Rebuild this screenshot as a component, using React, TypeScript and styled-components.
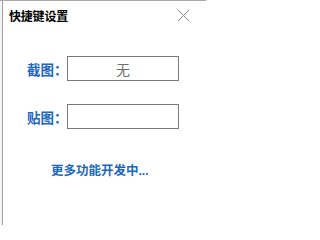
import React from "react";
import styled, { createGlobalStyle } from "styled-components";

const GlobalStyle = createGlobalStyle`
  html, body {
    margin: 0;
    padding: 0;
    background: #ffffff;
  }
  body {
    font-family: "Microsoft YaHei", "Noto Sans CJK SC", "Noto Sans", sans-serif;
    width: 206px;
    height: 225px;
    overflow: hidden;
  }
`;

const Screen = styled.div`
  height: 225px;
  border-top: 1px solid #a9a9a9;
  box-sizing: border-box;
  padding-left: 2px;
  background: #f4f4f4;
`;

const Dialog = styled.div`
  height: 100%;
  border-left: 1px solid #a0a0a0;
  background: #ffffff;
  display: flex;
  flex-direction: column;
`;

const TitleBar = styled.div`
  height: 29px;
  display: flex;
  align-items: center;
  justify-content: space-between;
  padding: 0 16px 0 6px;
`;

const Title = styled.span`
  font-size: 12px;
  color: #000000;
  font-weight: 700;
  letter-spacing: -0.2px;
`;

const CloseButton = styled.button`
  border: none;
  background: none;
  padding: 0;
  width: 13px;
  height: 13px;
  display: flex;
  cursor: pointer;
`;

const Form = styled.div`
  display: grid;
  grid-template-columns: 40px 112px;
  row-gap: 23px;
  align-items: center;
  padding: 26px 0 0 24px;
`;

const Label = styled.label`
  font-size: 13.5px;
  font-weight: 700;
  color: #1c67c1;
  white-space: nowrap;
`;

const Field = styled.div`
  height: 25px;
  box-sizing: border-box;
  border: 1px solid #7a7a7a;
  display: flex;
  align-items: center;
  justify-content: center;
  font-size: 14px;
  color: #6e6e6e;
`;

const MoreLink = styled.a`
  margin: 31px 0 0 48px;
  font-size: 12.5px;
  font-weight: 700;
  color: #1c67c1;
  text-decoration: none;
`;

const Dots = styled.span`
  font-family: "Liberation Sans", Arial, sans-serif;
  font-size: 12px;
`;

const App: React.FC = () => {
  return (
    <>
      <GlobalStyle />
      <Screen>
        <Dialog>
          <TitleBar>
            <Title>快捷键设置</Title>
            <CloseButton aria-label="close">
              <svg width="13" height="13" viewBox="0 0 13 13">
                <path d="M1 1 L12 12 M12 1 L1 12" stroke="#8a8a8a" strokeWidth="1" />
              </svg>
            </CloseButton>
          </TitleBar>
          <Form>
            <Label>截图：</Label>
            <Field>无</Field>
            <Label>贴图：</Label>
            <Field />
          </Form>
          <MoreLink>
            更多功能开发中<Dots>...</Dots>
          </MoreLink>
        </Dialog>
      </Screen>
    </>
  );
};

export default App;
